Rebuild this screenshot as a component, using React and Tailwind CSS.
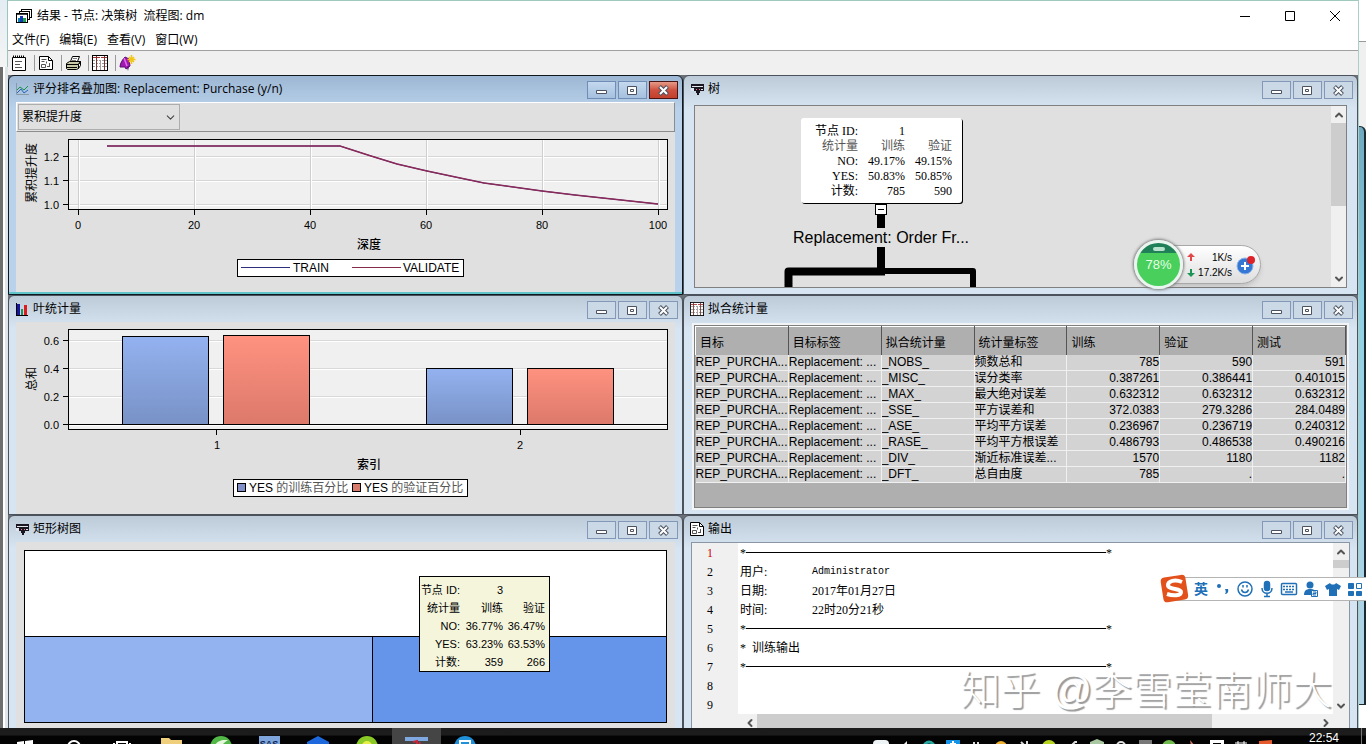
import React from "react";
import { ChevronDown, ChevronLeft, ChevronRight, ChevronUp } from "lucide-react";

const fitColumns = ["目标", "目标标签", "拟合统计量", "统计量标签", "训练", "验证", "测试"];

const fitRows = [
  ["_NOBS_", "频数总和", "785", "590", "591"],
  ["_MISC_", "误分类率", "0.387261", "0.386441", "0.401015"],
  ["_MAX_", "最大绝对误差", "0.632312", "0.632312", "0.632312"],
  ["_SSE_", "平方误差和", "372.0383", "279.3286", "284.0489"],
  ["_ASE_", "平均平方误差", "0.236967", "0.236719", "0.240312"],
  ["_RASE_", "平均平方根误差", "0.486793", "0.486538", "0.490216"],
  ["_DIV_", "渐近标准误差...", "1570", "1180", "1182"],
  ["_DFT_", "总自由度", "785", ".", "."],
];

const rootNode = [
  ["节点 ID:", "1", ""],
  ["统计量", "训练", "验证"],
  ["NO:", "49.17%", "49.15%"],
  ["YES:", "50.83%", "50.85%"],
  ["计数:", "785", "590"],
];

const leafNode = [
  ["节点 ID:", "3", ""],
  ["统计量", "训练", "验证"],
  ["NO:", "36.77%", "36.47%"],
  ["YES:", "63.23%", "63.53%"],
  ["计数:", "359", "266"],
];

/* ---------- icons ---------- */

const AppIcon = () => (
  <svg width="16" height="16" viewBox="0 0 16 16" shapeRendering="crispEdges">
    <path d="M5.5 1.5h10v8h-10z" fill="#fff" stroke="#000" />
    <path d="M3.5 3.5h10v8h-10z" fill="#fff" stroke="#000" />
    <path d="M.5 5.5h11v9H.5z" fill="#fff" stroke="#000" />
    <path d="M1 6h10v1H1z" fill="#444" />
    <path d="M2 10h2v4H2z" fill="#0b7fb5" />
    <path d="M4 8h3v6H4z" fill="#1637b5" />
    <path d="M7 10h3v4H7z" fill="#1ea04a" />
  </svg>
);

const NotesIcon = () => (
  <svg width="16" height="16" viewBox="0 0 16 16" fill="none" stroke="#000">
    <path d="M1.5 2.5h13v13h-13z" fill="#fff" />
    <path d="M2 1.5h12" strokeDasharray="1 1" strokeWidth="2" />
    <path d="M4 6.5h7M4 9.5h5M4 12.500h7" stroke="#555" />
  </svg>
);

const ReportIcon = () => (
  <svg width="14" height="14" viewBox="0 0 14 14" fill="none" stroke="#000">
    <path d="M.5 .5h9l4 4v9H.5z" fill="#fff" />
    <path d="M9.5 .5v4h4" />
    <path d="M2.5 3.5h5M2.5 5.5h3M7.500 5.500v2M2.500 8.500h4v3h-4zM8 10.500h3M10.500 7v4" stroke="#555" />
  </svg>
);

const PrinterIcon = () => (
  <svg width="17" height="16" viewBox="0 0 17 16" stroke="#000">
    <path d="M5.5 6.5l2-5h7l-2 5z" fill="#fff" />
    <path d="M8 3.500h4M7 5.500h4" stroke="#777" />
    <path d="M1.500 8.500l3-2h11l-2 3v4l-2 1h-9l-1-1z" fill="#c9c9a8" />
    <path d="M1.500 9.500h11.500M2 12.500h10M13.500 9.500l2-3v4l-2 3" fill="none" />
  </svg>
);

const TableIcon = () => (
  <svg width="16" height="16" viewBox="0 0 16 16" shapeRendering="crispEdges">
    <path d="M.5 .5h15v15H.5z" fill="#fff" stroke="#000" />
    <path d="M1 2.500h14" stroke="#a33" strokeDasharray="3 1" />
    <path d="M1 5.500h14M1 8.500h14M1 11.500h14" stroke="#999" strokeDasharray="2 1" />
    <path d="M4.500 1v14M12.500 1v14" stroke="#733" />
    <path d="M8.500 5v10" stroke="#a99" />
  </svg>
);

const HelpIcon = () => (
  <svg width="17" height="17" viewBox="0 0 17 17">
    <path d="M1 12c0-4 3-8 5-10l4 2 1 7-4 3-1-2z" fill="#a018b0" stroke="#5a0a72" />
    <path d="M5 3l3 8" stroke="#e56bf0" strokeWidth="1.500" />
    <path d="M8 12l1 4 1-5" fill="#5a0a72" />
    <path d="M12.500 0v9M8.500 4.500h8M10 2l5 5M15 2l-5 5" stroke="#f3c515" strokeWidth="1.500" />
  </svg>
);

const LineIcon = () => (
  <svg width="13" height="13" viewBox="0 0 13 13" fill="none">
    <path d="M.5 0v11.500H13" stroke="#89a" />
    <path d="M1 7l3-3 4 3 4-4" stroke="#14934d" />
    <path d="M1 10l4-4 3 4 4-3" stroke="#2b62b8" />
  </svg>
);

const BarsIcon = () => (
  <svg width="13" height="13" viewBox="0 0 13 13" shapeRendering="crispEdges">
    <path d="M1 1h3v11H1z" fill="#14149c" />
    <path d="M5 6h2v6H5z" fill="#1c9450" />
    <path d="M8 2h3v10H8z" fill="#dc1c1c" />
    <path d="M.5 0v12.500H12" stroke="#000" fill="none" />
  </svg>
);

const TreeIcon = () => (
  <svg width="13" height="13" viewBox="0 0 13 13" shapeRendering="crispEdges">
    <path d="M0 1h13v7H0z" fill="#1c1620" />
    <path d="M1 3h11v1H1zM0 5h3v3H0zM10 6h2v1h-2z" fill="#dfe6ee" />
    <path d="M5 6h1v1H5zM8 6h1v1H8z" fill="#e78" />
    <path d="M5 8h4v2H8v2H6v-2H5z" fill="#1c1620" />
  </svg>
);

/* ---------- window chrome ---------- */

const ChromeButton = ({ label, danger, active, children }) => (
  <button
    aria-label={label}
    className={
      "flex h-[18px] w-[29px] items-center justify-center border " +
      (danger
        ? "border-[#4a1414] bg-linear-to-b from-[#e49a88] via-[#cf5040] to-[#c2402c]"
        : active
          ? "border-[#6f8db5] bg-linear-to-b from-[#c4d8ee] to-[#a5c0de]"
          : "border-[#8398b8] bg-[#cbd8e6]")
    }
  >
    <svg width="13" height="11" viewBox="0 0 13 11" fill="none">
      {children}
    </svg>
  </button>
);

const Panel = ({ title, icon, active, children }) => (
  <section
    className={
      "flex min-w-0 flex-col overflow-hidden rounded-t-md border bg-linear-to-b " +
      (active
        ? "border-[#10181f] from-[#9db7d4] to-[#b9d1ea] to-15%"
        : "border-[#4b525b] from-[#bdcad8] to-[#d7e4f1] to-15%")
    }
  >
    <header className="flex h-[26px] shrink-0 items-center gap-1 pr-1 pl-[6px]">
      <span className="flex w-[14px] justify-center">{icon}</span>
      <h2 className="flex-1 truncate text-xs whitespace-pre">{title}</h2>
      <div className="flex gap-[2px] pt-[2px]">
        <ChromeButton label="最小化" active={active}>
          <path d="M1.500 5.500h10v3h-10z" fill="#fff" stroke="#4c5260" />
        </ChromeButton>
        <ChromeButton label="最大化" active={active}>
          <path d="M1.500 1.500h9v8h-9z" fill="#fff" stroke="#4c5260" />
          <path d="M4.500 4.500h3v2h-3z" stroke="#4c5260" />
        </ChromeButton>
        <ChromeButton label="关闭" danger={active} active={active}>
          <path d="M2.500 1.500l8 8M10.500 1.500l-8 8" stroke="#4c5260" strokeWidth="4" />
          <path d="M3 2l7 7M10 2l-7 7" stroke="#fff" strokeWidth="2" />
        </ChromeButton>
      </div>
    </header>
    {children}
  </section>
);

const ArrowButton = ({ label, icon: Icon }) => (
  <button aria-label={label} className="flex h-[17px] w-[15px] shrink-0 items-center justify-center">
    <Icon size={12} strokeWidth={4} color="#555" />
  </button>
);

/* ---------- panels ---------- */

// Data coordinates: depth 0..100 -> x 78.5..658.5, lift 1.0..1.2 -> y 204..157
const LiftChart = () => (
  <svg viewBox="16 132 659 160" className="w-full bg-[#e0e0e0] text-[11px]">
    <rect x="68.500" y="139.500" width="599" height="70" fill="#f0f0f0" />
    {[156.5, 180.5, 204.5].map((y, i) => (
      <g key={y}>
        <path d={`M69 ${y}H667`} stroke="#d6d6d6" />
        <path d={`M69 ${y + 1}H667`} stroke="#fff" />
        <path d={`M63 ${y}H68`} stroke="#000" />
        <text x="59" y={y + 4} textAnchor="end">{["1.2", "1.1", "1.0"][i]}</text>
      </g>
    ))}
    {[0, 20, 40, 60, 80, 100].map((v) => (
      <g key={v}>
        <path d={`M${78.5 + v * 5.8} 140V209`} stroke="#cfcfcf" />
        <path d={`M${79.5 + v * 5.8} 140V209`} stroke="#fff" />
        <path d={`M${78.5 + v * 5.8} 210V215`} stroke="#000" />
        <text x={78 + v * 5.8} y="229" textAnchor="middle">{v}</text>
      </g>
    ))}
    <rect x="68.500" y="139.500" width="599" height="70" fill="none" stroke="#000" />
    <path d="M107 146H340L371 156L397 164L427 171L455 177L484 183L542 191L575 195L658 204" fill="none" stroke="#2a2a8c" />
    <path d="M107 146H340L371 156L397 164L427 171L484 183L542 191L575 195L658 204" fill="none" stroke="#8a2a58" strokeWidth="1.500" />
    <text transform="translate(36 173) rotate(-90)" textAnchor="middle" fontSize="12">累积提升度</text>
    <text x="369" y="249" textAnchor="middle" fontSize="12" fontWeight="500">深度</text>
    <rect x="237.500" y="259.500" width="226" height="17" fill="#fff" stroke="#000" />
    <path d="M241 267.500H290" stroke="#2e2e7c" />
    <text x="293" y="272" fontSize="12">TRAIN</text>
    <path d="M352 267.500H401" stroke="#842c48" />
    <text x="403" y="272" fontSize="12">VALIDATE</text>
  </svg>
);

const leafBars = [
  { x: 122.5, y: 336.5, fill: "url(#blueBar)" },
  { x: 223.5, y: 335.5, fill: "url(#redBar)" },
  { x: 426.5, y: 368.5, fill: "url(#blueBar)" },
  { x: 527.5, y: 368.5, fill: "url(#redBar)" },
];

const LeafChart = () => (
  <svg viewBox="16 322 659 192" className="w-full bg-[#e0e0e0] text-[11px]">
    <defs>
      <linearGradient id="blueBar" x2="0" y2="1">
        <stop stopColor="#94b2f0" />
        <stop offset="1" stopColor="#7892c6" />
      </linearGradient>
      <linearGradient id="redBar" x2="0" y2="1">
        <stop stopColor="#ff9280" />
        <stop offset="1" stopColor="#dc796b" />
      </linearGradient>
    </defs>
    <rect x="68.500" y="329.500" width="599" height="100" fill="#f0f0f0" />
    {["0.6", "0.4", "0.2", "0.0"].map((t, i) => (
      <g key={t}>
        <path d={`M69 ${340.5 + i * 28}H667`} stroke="#d9d9d9" />
        <path d={`M69 ${341.5 + i * 28}H667`} stroke="#fff" />
        <path d={`M63 ${340.5 + i * 28}H68`} stroke="#000" />
        <text x="59" y={345 + i * 28} textAnchor="end">{t}</text>
      </g>
    ))}
    {leafBars.map((b) => (
      <rect key={b.x} x={b.x} y={b.y} width="86" height={424.5 - b.y} fill={b.fill} stroke="#000" />
    ))}
    <path d="M69 424.500H667" stroke="#000" />
    <rect x="68.500" y="329.500" width="599" height="100" fill="none" stroke="#000" />
    <path d="M216.500 430V435M520.500 430V435" stroke="#000" />
    <text x="217" y="449" textAnchor="middle">1</text>
    <text x="520" y="449" textAnchor="middle">2</text>
    <text transform="translate(36 379) rotate(-90)" textAnchor="middle" fontSize="12">总和</text>
    <text x="369" y="469" textAnchor="middle" fontSize="12" fontWeight="500">索引</text>
    <rect x="233.500" y="479.500" width="234" height="17" fill="#fff" stroke="#000" />
    <rect x="237.500" y="483.500" width="8" height="8" fill="#8290c8" stroke="#000" />
    <text x="249" y="492" fontSize="12">YES <tspan fill="#555">的训练百分比</tspan></text>
    <rect x="352.500" y="483.500" width="8" height="8" fill="#d87a6c" stroke="#000" />
    <text x="364" y="492" fontSize="12">YES <tspan fill="#555">的验证百分比</tspan></text>
  </svg>
);

const TreeDiagram = () => (
  <div className="mx-[10px] mt-[3px] flex h-[183px] border border-[#808080] bg-[#e0e0e0]">
    <svg viewBox="695 106 634 181" className="h-full min-w-0 flex-1">
      <rect x="801" y="119" width="161" height="85" rx="3" fill="#000" />
      <rect x="800" y="118" width="161" height="85" rx="3" fill="#fff" />
      <g className="font-['Liberation_Serif','Noto_Sans_CJK_SC',serif] text-xs" textAnchor="end">
        {rootNode.map(([name, train, valid], i) => (
          <g key={name} fill={i === 1 ? "#555" : "#000"}>
            <text x="857" y={135 + i * 15}>{name}</text>
            <text x="904" y={135 + i * 15}>{train}</text>
            <text x="951" y={135 + i * 15}>{valid}</text>
          </g>
        ))}
      </g>
      <rect x="874.500" y="204.500" width="11" height="10" fill="#fff" stroke="#000" />
      <path d="M877 209.500h6" stroke="#000" />
      <path d="M880 215V228M880 247V272" stroke="#000" strokeWidth="8" />
      <path d="M787.500 290V271.500H884" fill="none" stroke="#000" strokeWidth="8" strokeLinejoin="round" />
      <path d="M884 271H972V290" fill="none" stroke="#000" strokeWidth="6" strokeLinejoin="round" />
      <text x="880" y="243" textAnchor="middle" fontSize="16">Replacement: Order Fr...</text>
    </svg>
    <div className="flex w-[15px] flex-col bg-[#f0f0f0]">
      <ArrowButton label="向上" icon={ChevronUp} />
      <div className="h-[83px] bg-[#cdcdcd]" />
      <div className="flex-1" />
      <ArrowButton label="向下" icon={ChevronDown} />
    </div>
  </div>
);

const FitTable = () => (
  <div className="mx-[10px] mt-[3px] h-[183px] border border-[#808080] bg-[#afafaf] text-xs outline-2 outline-[#f2f4f6]">
    <table className="w-full table-fixed border-collapse">
      <thead>
        <tr className="h-7">
          {fitColumns.map((name) => (
            <th
              key={name}
              className="border-t border-r border-l border-t-white border-r-[#555] border-l-white bg-[#afafaf] pt-1 pl-1 text-left font-normal"
            >
              {name}
            </th>
          ))}
        </tr>
      </thead>
      <tbody>
        {fitRows.map(([stat, label, ...values]) => (
          <tr key={stat} className="h-4 bg-[#d3d3d3] leading-[15px]">
            {["REP_PURCHA...", "Replacement: ...", stat, label].map((text) => (
              <td key={text} className="overflow-hidden border-r border-b border-[#f0f0f0] p-0 whitespace-nowrap">
                {text}
              </td>
            ))}
            {values.map((v, i) => (
              <td key={i} className="border-r border-b border-[#f0f0f0] p-0 text-right">{v}</td>
            ))}
          </tr>
        ))}
      </tbody>
    </table>
  </div>
);

const TreeMap = () => (
  <div className="mx-[7px] flex-1 bg-[#e0e0e0] px-2 pt-2">
    <div className="relative border border-black">
      <div className="h-[85px] bg-white" />
      <div className="flex h-[86px] border-t border-black">
        <div className="flex-[348] border-r border-black bg-[#92b3f0]" />
        <div className="flex-[293] bg-[#6495eb]" />
      </div>
      <div className="absolute top-[25px] left-[394px] border border-black bg-[#f5f5dc] pt-1 pr-1">
        <table className="text-right text-[11px] leading-[18px]">
          <tbody>
            {leafNode.map(([name, train, valid]) => (
              <tr key={name}>
                <td className="w-10 p-0 whitespace-nowrap">{name}</td>
                <td className="w-[43px] p-0">{train}</td>
                <td className="w-[42px] p-0">{valid}</td>
              </tr>
            ))}
          </tbody>
        </table>
      </div>
    </div>
  </div>
);

const Rule = () => (
  <span className="flex items-center">
    <span className="w-[6px]">*</span>
    <span className="h-px w-[360px] bg-black" />
    <span>*</span>
  </span>
);

const outputLines = [
  <Rule />,
  <><span className="w-[72px]">用户:</span><span className="font-['Liberation_Mono',monospace] text-[10px]">Administrator</span></>,
  <><span className="w-[72px]">日期:</span>2017年01月27日</>,
  <><span className="w-[72px]">时间:</span>22时20分21秒</>,
  <Rule />,
  <span className="whitespace-pre">*  训练输出</span>,
  <Rule />,
  null,
  null,
];

const OutputView = () => (
  <div className="mx-[7px] flex min-h-0 flex-1 border-x border-t border-[#8a96a3] bg-white">
    <div className="flex min-w-0 flex-1 flex-col">
      <ol className="h-[171px] shrink-0 font-['Liberation_Serif','Noto_Sans_CJK_SC',serif] text-xs">
        {outputLines.map((line, i) => (
          <li key={i} className="flex h-[19px] items-center">
            <span
              className={
                "flex h-full w-[46px] shrink-0 items-center bg-[#f0f0f0] pl-[15px] " +
                (i === 0 ? "text-[#d00000]" : "")
              }
            >
              {i + 1}
            </span>
            <span className="flex items-center pl-[2px]">{line}</span>
          </li>
        ))}
      </ol>
      <div className="flex flex-1 bg-[#f0f0f0] pl-[50px]">
        <ArrowButton label="向左" icon={ChevronLeft} />
        <div className="w-[77%] bg-[#cdcdcd]" />
        <div className="flex-1" />
        <ArrowButton label="向右" icon={ChevronRight} />
      </div>
    </div>
    <div className="flex w-4 flex-col items-center bg-[#f0f0f0] pb-5">
      <ArrowButton label="向上" icon={ChevronUp} />
      <div className="h-2 w-full bg-[#cdcdcd]" />
      <div className="flex-1" />
      <ArrowButton label="向下" icon={ChevronDown} />
    </div>
  </div>
);

/* ---------- floating tools ---------- */

const NetMonitor = () => (
  <div className="absolute top-[240px] right-[105px] flex items-center text-[10px]">
    <div className="relative z-10 -mr-6 flex size-[49px] items-center justify-center overflow-hidden rounded-full border-3 border-[#e9f5ee] bg-linear-to-b from-[#1f7f57] from-22% to-[#48cf5c] to-24% text-[13px] text-[#e6ffe6] shadow-[0_0_3px_1px_#777]">
      78%
      <span className="absolute top-1 h-1 w-3 rounded-full bg-[#b7e2cc]" />
    </div>
    <div className="flex h-[39px] w-[102px] items-center justify-end gap-1 rounded-r-full border border-[#a8a8a8] bg-linear-to-b from-white to-[#dedede] pr-1 shadow-md">
      <div className="w-[45px] leading-[15px]">
        <div className="flex items-center justify-between">
          <svg width="8" height="9" viewBox="0 0 8 9"><path d="M4 0l4 4H5v4H3V4H0z" fill="#e04848" /></svg>
          1K/s
        </div>
        <div className="flex items-center justify-between">
          <svg width="8" height="9" viewBox="0 0 8 9"><path d="M4 9l4-4H5V1H3v4H0z" fill="#1b9458" /></svg>
          17.2K/s
        </div>
      </div>
      <svg width="20" height="22" viewBox="0 0 20 22">
        <circle cx="9" cy="12" r="8" fill="#3478d4" stroke="#8db4e8" />
        <path d="M9 8v8M5 12h8" stroke="#fff" strokeWidth="2" />
        <circle cx="15" cy="6" r="4" fill="#dd2229" />
      </svg>
    </div>
  </div>
);

const imeIcons = [
  <g key="dot" fill="#2070b8"><circle cx="5" cy="6" r="2" /><path d="M11 9h3c1 3-1 5-3 5 1-1 1-3 0-5z" /></g>,
  <g key="face" fill="none" stroke="#2070b8" strokeWidth="1.500"><circle cx="9" cy="9" r="7" /><path d="M5.500 9.500c1 4 6 4 7 0M7 5v2.500M11 5v2.500" /></g>,
  <g key="mic" fill="none" stroke="#2070b8" strokeWidth="1.500"><rect x="6.500" y="1.500" width="5" height="9" rx="2.500" fill="#2070b8" /><path d="M4 8c0 7 10 7 10 0M9 13v3M6 16.500h6" /></g>,
  <g key="kbd" fill="none" stroke="#2070b8" strokeWidth="1.500"><rect x="1.500" y="3.500" width="15" height="11" rx="1" /><path d="M3 6.500h12M3 9.500h12" strokeDasharray="2 1" /><path d="M5 12h8" /></g>,
  <g key="user" fill="#2070b8"><circle cx="8" cy="5" r="3.500" /><path d="M2 15c0-4 2-6 6-6s4 1 5 2v4z" /><path d="M9.500 10.500h6v6h-6z" fill="#fff" stroke="#2070b8" /><path d="M11 12h3v1.500h-3V15h3" fill="none" stroke="#2070b8" /></g>,
  <path key="shirt" d="M6 3c1 2 5 2 6 0l5 3-2 4-2-1v7H5V9l-2 1-2-4z" fill="#2070b8" />,
  <g key="grid" fill="#2070b8" stroke="#2070b8"><path d="M2.500 3.500h5v5h-5zM2.500 11.500h5v4h-5zM10.500 11.500h5v4h-5z" /><path d="M10.500 3.500h5v5h-5z" fill="#fff" /></g>,
];

const ImeBar = () => (
  <div className="absolute top-[577px] right-0 flex h-6 w-[190px] items-center border-y border-[#b4b4b4] bg-white pl-[14px]">
    <svg className="absolute -top-[4px] -left-4" width="30" height="30" viewBox="0 0 30 30">
      <rect x="2" y="2" width="25" height="25" rx="4" fill="#e2501c" transform="rotate(-9 15 15)" />
      <path d="M22 8C15 5 8 7 8 11c0 5 13 3 13 7 0 4-8 4-14 2" fill="none" stroke="#fff" strokeWidth="4" />
    </svg>
    <button className="w-[22px] text-sm font-bold text-[#2070b8]">英</button>
    {imeIcons.map((icon) => (
      <button key={icon.key} aria-label={icon.key} className="flex w-[22px] justify-center">
        <svg width="18" height="18" viewBox="0 0 18 18">{icon}</svg>
      </button>
    ))}
  </div>
);

/* ---------- taskbar ---------- */

const apps = [
  { name: "start", art: <path d="M4 6l7-1v9H4zM12 5l8-1v10h-8z" fill="#fff" /> },
  { name: "search", art: <circle cx="12" cy="11" r="6" fill="none" stroke="#fff" strokeWidth="2" /> },
  { name: "tasks", art: <path d="M6 14V6h10v8M3 7v7M19 7v7" fill="none" stroke="#fff" strokeWidth="2" /> },
  { name: "files", art: <path d="M1 2h8l2 2h11v12H1z" fill="#f0cf7c" /> },
  { name: "browser", art: <><circle cx="12" cy="11" r="11" fill="#52b848" /><path d="M4 12c5-9 10-8 15-8-4 3-6 4-9 10z" fill="#e7f7dc" /></> },
  { name: "sas", art: <><rect x="1" y="0" width="21" height="18" fill="#7fa6dc" /><text x="11" y="11" fontSize="9" fontWeight="700" fill="#10234f" textAnchor="middle">SAS</text></> },
  { name: "cloud", art: <path d="M11 0l11 6v10H0V6z" fill="#1c68dc" /> },
  { name: "player", art: <><circle cx="11" cy="11" r="11" fill="#8ac926" /><circle cx="11" cy="10" r="5" fill="#e8ee4a" /><circle cx="11" cy="10" r="2" fill="#274" /></> },
  { name: "miner", active: true, art: <><path d="M0 1h23v4H0z" fill="#7fa8e0" /><path d="M8 6l4-1v9M15 6l-2 8" stroke="#c4283c" strokeWidth="2" fill="none" /></> },
  { name: "pc", art: <><circle cx="11" cy="11" r="11" fill="#2090d8" /><path d="M6 5h10v9H6z" fill="none" stroke="#fff" strokeWidth="2" /></> },
];

const trayArt = [
  <rect key="cloud" x="0" y="2" width="16" height="12" rx="4" fill="#eef3f5" />,
  <path key="vol" d="M4 9l6-6v9" fill="#eee" />,
  <circle key="ring" cx="8" cy="9" r="5" fill="none" stroke="#27a6a0" strokeWidth="3" />,
  <g key="blue"><rect x="1" y="2" width="14" height="10" fill="#1595e8" /><path d="M8 3v6M5 6h6" stroke="#fff" strokeWidth="2" /></g>,
  <path key="tick" d="M5 4v4M9 4v4" stroke="#ddd" strokeWidth="2" />,
  <circle key="gold" cx="8" cy="9" r="6" fill="#eeb02f" />,
  <path key="wave" d="M4 4l4 4M10 3v5" stroke="#ddd" strokeWidth="2" />,
  <g key="lime"><circle cx="8" cy="9" r="7" fill="#b6d320" /><circle cx="8" cy="9" r="3" fill="#23702c" /></g>,
  <path key="pen" d="M5 9l5-5h2" stroke="#ddd" strokeWidth="2" fill="none" />,
  <path key="shield" d="M1 4l7-3 7 3v8H1z" fill="#a9c8a2" />,
  <circle key="net" cx="8" cy="8" r="4" fill="none" stroke="#ddd" strokeWidth="2" />,
  <rect key="box" x="2" y="2" width="13" height="12" fill="#777" />,
  <circle key="leaf" cx="8" cy="9" r="7" fill="#70b94c" />,
  <path key="flag" d="M5 2l5 6H6z" fill="#d67a6c" />,
  <path key="card" d="M1 2h14v3H1zM1 5h3v6H1zM12 5h3v6h-3zM6 7h4v3H6z" fill="#fff" />,
  <path key="ime" d="M2 5h12M5 3v5M11 3v5M4 9h8" stroke="#fff" strokeWidth="1" />,
  <path key="sogou" d="M2 3l13-1v10H2z" fill="#e45a2c" />,
];

const Taskbar = () => (
  <footer className="absolute inset-x-0 bottom-0 flex h-4 items-start overflow-hidden bg-linear-to-b from-[#1c1c1c] from-45% to-[#030303] to-50%">
    {apps.map((app) => (
      <button
        key={app.name}
        aria-label={app.name}
        className={"flex h-full w-[49px] items-start justify-center overflow-hidden pt-2 " + (app.active ? "bg-[#454545]" : "")}
      >
        <svg className="shrink-0" width="23" height="20" viewBox="0 0 23 20">{app.art}</svg>
      </button>
    ))}
    <div className="ml-auto flex h-full pt-[10px]">
      {trayArt.map((art) => (
        <button key={art.key} aria-label={art.key} className="flex w-6 items-start justify-center">
          <svg className="shrink-0" width="16" height="16" viewBox="0 0 16 16">{art}</svg>
        </button>
      ))}
    </div>
    <time className="mr-[22px] ml-8 pt-1 text-xs leading-[12px] text-white">22:54</time>
    <span className="mr-1 h-full border-l border-[#777]" />
  </footer>
);

export default function App() {
  return (
    <div className="relative flex h-screen overflow-hidden bg-[#f0f0f0] font-['Liberation_Sans','Noto_Sans_CJK_SC',sans-serif] text-black">
      {/* edge of the window behind */}
      <div className="flex w-2 shrink-0 flex-col">
        <div className="h-[67px] border-r border-[#9cc5c0] bg-linear-to-b from-[#e4edf4] to-[#f4f4f4]" />
        <div className="flex-1 border-x-3 border-[#6e6e6e] border-r-[#dfe4e8] bg-white" />
      </div>

      <main className="min-w-0 flex-1">
        <div className="border-t border-[#9fc9bd] bg-white font-['Open_Sans','Noto_Sans_CJK_SC',sans-serif]">
          <div className="flex h-[29px] items-center gap-[5px] pl-2 text-xs">
            <AppIcon />
            <h1 className="flex-1 whitespace-pre">结果 - 节点: 决策树  流程图: dm</h1>
            <div className="flex pr-[1px]">
              {["M1 6.500h10", "M1.500 1.500h9v9h-9z", "M1 1l10 10M11 1L1 11"].map((d, i) => (
                <button key={d} aria-label={["最小化", "最大化", "关闭"][i]} className="flex w-[45px] justify-center">
                  <svg width="12" height="12" viewBox="0 0 12 12" fill="none" stroke="#000"><path d={d} /></svg>
                </button>
              ))}
            </div>
          </div>
          <nav className="flex h-[21px] items-center gap-[10px] border-b border-[#a0a0a0] pl-1 text-xs">
            {["文件(F)", "编辑(E)", "查看(V)", "窗口(W)"].map((name) => (
              <button key={name}>{name}</button>
            ))}
          </nav>
        </div>

        <div className="flex h-6 items-center">
          {[NotesIcon, ReportIcon, PrinterIcon, TableIcon, HelpIcon].map((Icon, i) => (
            <button
              key={i}
              aria-label={["属性", "报表", "打印", "表", "帮助"][i]}
              className="flex h-4 w-[27px] items-center justify-center border-r border-[#999] pr-1 last:border-transparent"
            >
              <Icon />
            </button>
          ))}
        </div>

        <div className="grid auto-rows-[220px] grid-cols-2 bg-[#6b7078] [&_h2]:font-['Open_Sans','Noto_Sans_CJK_SC',sans-serif]">
          <Panel title="评分排名叠加图: Replacement: Purchase (y/n)" icon={<LineIcon />} active>
            <div className="mx-[7px]">
              <div className="h-[30px] border border-t-white border-r-[#8c8c8c] border-b-[#8c8c8c] border-l-white bg-[#e0e0e0] p-px">
                <div className="relative h-full w-[162px]">
                  <select aria-label="统计量" className="h-full w-full appearance-none border border-[#adadad] pl-[3px] text-xs">
                    <option>累积提升度</option>
                  </select>
                  <ChevronDown className="absolute top-[7px] right-[3px]" size={13} color="#444" />
                </div>
              </div>
              <LiftChart />
            </div>
            <div className="h-[2px] bg-[#5fc3c9]" />
          </Panel>
          <Panel title="树" icon={<TreeIcon />}>
            <TreeDiagram />
          </Panel>
          <Panel title="叶统计量" icon={<BarsIcon />}>
            <div className="mx-[7px]">
              <LeafChart />
            </div>
          </Panel>
          <Panel title="拟合统计量" icon={<TableIcon />}>
            <FitTable />
          </Panel>
          <Panel title="矩形树图" icon={<TreeIcon />}>
            <TreeMap />
          </Panel>
          <Panel title="输出" icon={<ReportIcon />}>
            <OutputView />
          </Panel>
        </div>
      </main>

      <div className="flex w-2 shrink-0 flex-col border-l border-[#a9cfc8]">
        <div className="h-[42px] border-b border-[#999] bg-white" />
        <div className="h-[84px] bg-[#f0f0f0]" />
        <div className="h-[579px] rounded-tr-md border-t border-r-2 border-b border-[#1a2a30] bg-linear-to-b from-[#6fa9bf] via-[#8fd0e4] via-30% to-[#b4d4e6]" />
        <div className="flex-1 bg-white" />
      </div>

      <p className="absolute right-[34px] bottom-[34px] text-[40px] leading-[40px] font-light text-white [text-shadow:2px_2px_1px_#9a9a9a]">
        知乎 @李雪莹南师大
      </p>
      <NetMonitor />
      <ImeBar />
      <Taskbar />
    </div>
  );
}
